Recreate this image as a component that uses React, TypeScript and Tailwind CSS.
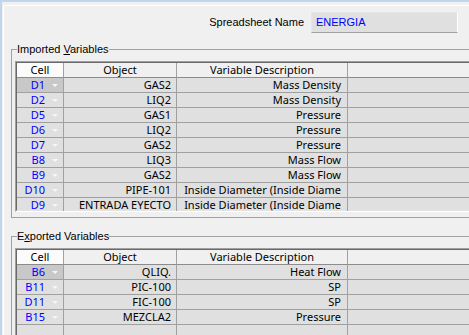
import React from "react";

type Row = { cell: string; obj: string; desc: string; sel?: boolean };

const imported: Row[] = [
  { cell: "D1", obj: "GAS2", desc: "Mass Density", sel: true },
  { cell: "D2", obj: "LIQ2", desc: "Mass Density" },
  { cell: "D5", obj: "GAS1", desc: "Pressure" },
  { cell: "D6", obj: "LIQ2", desc: "Pressure" },
  { cell: "D7", obj: "GAS2", desc: "Pressure" },
  { cell: "B8", obj: "LIQ3", desc: "Mass Flow" },
  { cell: "B9", obj: "GAS2", desc: "Mass Flow" },
  { cell: "D10", obj: "PIPE-101", desc: "Inside Diameter (Inside Diame" },
  { cell: "D9", obj: "ENTRADA EYECTO", desc: "Inside Diameter (Inside Diame" },
];

const exported: Row[] = [
  { cell: "B6", obj: "QLIQ.", desc: "Heat Flow", sel: true },
  { cell: "B11", obj: "PIC-100", desc: "SP" },
  { cell: "D11", obj: "FIC-100", desc: "SP" },
  { cell: "B15", obj: "MEZCLA2", desc: "Pressure" },
  { cell: "", obj: "", desc: "" },
];

function Arrow() {
  return (
    <svg width="6" height="3" viewBox="0 0 6 3" className="shrink-0">
      <path d="M0 0h6L3 3z" fill="#f6f6f6" />
    </svg>
  );
}

function Grid({ rows, tall }: { rows: Row[]; tall?: boolean }) {
  return (
    <div
      className={`mt-[5px] ml-[3px] overflow-hidden border-t border-l border-b border-t-[#a0a0a0] border-l-[#a0a0a0] border-b-white font-['Noto_Sans',sans-serif] ${
        tall ? "h-[151px]" : "h-[200px]"
      }`}
    >
      <div className="h-full border-t border-l border-[#696969] border-b border-b-[#e3e3e3] bg-[#e0e0e0]">
        <div className="grid grid-cols-[47px_113px_171px_1fr] auto-rows-[15px] leading-[14px] whitespace-nowrap">
          <div className="border-r border-b border-r-[#a0a0a0] border-b-[#8c8c8c] bg-[#fbfbfb] text-center">Cell</div>
          <div className="border-r border-b border-r-[#a0a0a0] border-b-[#8c8c8c] bg-[#f0f0f0] text-center">Object</div>
          <div className="border-r border-b border-r-[#a0a0a0] border-b-[#8c8c8c] bg-[#f0f0f0] text-center">
            Variable Description
          </div>
          <div className="border-b border-b-[#8c8c8c] bg-[#f0f0f0]" />
          {rows.map((r, i) => (
            <React.Fragment key={i}>
              <div
                className={`flex items-center justify-end gap-[7px] pr-[5px] border-r border-b border-[#a0a0a0] text-[#0000ff] ${
                  r.sel ? "bg-[#c8c8c8]" : ""
                }`}
              >
                {r.cell && (
                  <>
                    <span>{r.cell}</span>
                    <Arrow />
                  </>
                )}
              </div>
              <div className="overflow-hidden pr-[5px] text-right border-r border-b border-[#a0a0a0]">{r.obj}</div>
              <div className="overflow-hidden pr-[6px] text-right border-r border-b border-[#a0a0a0]">{r.desc}</div>
              <div className="border-b border-[#a0a0a0]" />
            </React.Fragment>
          ))}
        </div>
      </div>
    </div>
  );
}

export default function App() {
  return (
    <div className="w-[469px] h-[335px] overflow-hidden bg-[#f0f0f0] border-t-2 border-l-2 border-[#c1d5ec] text-[11px] text-black font-['Liberation_Sans',Arial,sans-serif]">
      <div className="h-full pt-[3px] pl-px">
        <div className="h-full border-t border-l border-white">
          <div className="mt-[6px] flex items-center justify-end gap-[7px] pr-[11px]">
            <span>Spreadsheet Name</span>
            <div className="h-[21px] w-[147px] border border-[#e6e6e6] border-r-white border-b-[#a0a0a0] bg-[#e0e0e0] pl-[4px] leading-[19px] text-[#0000ff]">
              ENERGIA
            </div>
          </div>

          <fieldset className="mt-[10px] ml-[7px] border-t border-l border-b border-[#a0a0a0] pb-[5px]">
            <legend className="ml-[5px] leading-[13px]">
              Imported <span className="underline">V</span>ariables
            </legend>
            <Grid rows={imported} tall />
          </fieldset>

          <fieldset className="mt-[12px] ml-[7px] border-t border-l border-b border-[#a0a0a0] pb-[5px]">
            <legend className="ml-[5px] leading-[13px]">
              E<span className="underline">x</span>ported Variables
            </legend>
            <Grid rows={exported} />
          </fieldset>
        </div>
      </div>
    </div>
  );
}
